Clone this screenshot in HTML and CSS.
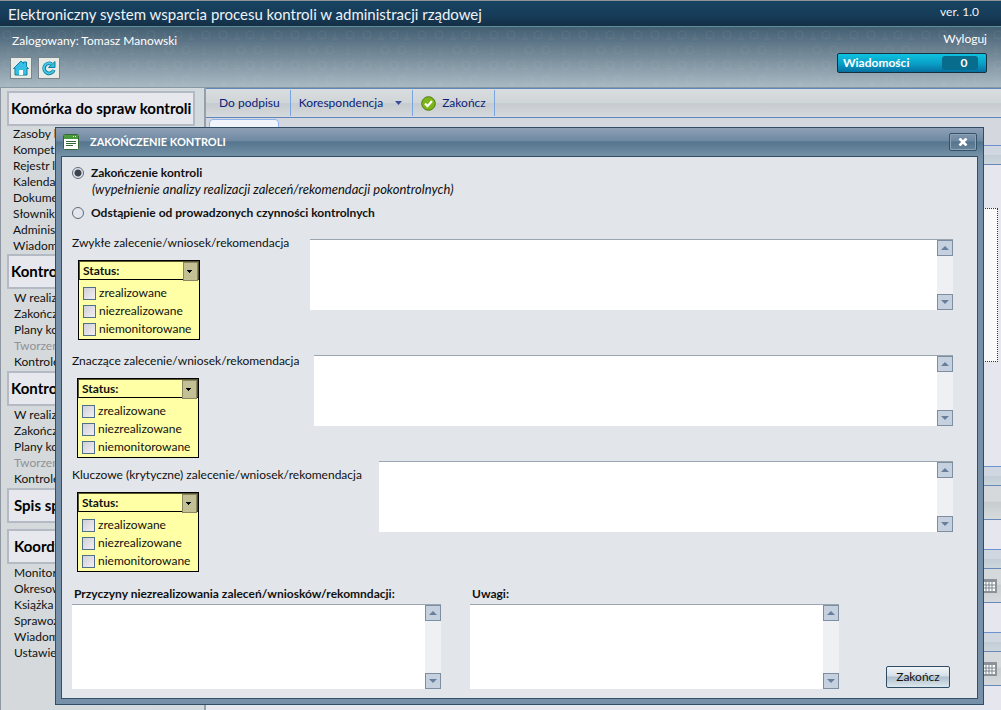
FILE: index.html
```html
<!DOCTYPE html>
<html lang="pl">
<head>
<meta charset="utf-8">
<title>Elektroniczny system wsparcia procesu kontroli</title>
<link rel="stylesheet" href="styles.css">
</head>
<body>
<header class="topbar">
  <h1>Elektroniczny system wsparcia procesu kontroli w administracji rządowej</h1>
  <span class="version">ver. 1.0</span>
</header>
<div class="banner">
  <svg class="pattern" width="100%" height="100%" aria-hidden="true">
    <defs>
      <pattern id="bits" width="72" height="30" patternUnits="userSpaceOnUse">
        <g fill="none" stroke="#fff">
          <ellipse cx="7" cy="8" rx="4" ry="4"/><path d="M21 4v8M18 12h6M47 4v8M44 12h6"/>
          <ellipse cx="34" cy="8" rx="4" ry="4"/><ellipse cx="62" cy="8" rx="4" ry="4"/>
          <path d="M8 19v8M5 27h6M60 19v8M57 27h6"/>
          <ellipse cx="25" cy="23" rx="4" ry="4"/><ellipse cx="42" cy="23" rx="4" ry="4"/>
        </g>
      </pattern>
    </defs>
    <rect width="100%" height="100%" fill="url(#bits)"/>
  </svg>
  <div class="user">
    <p>Zalogowany: Tomasz Manowski</p>
    <div class="tools">
      <button type="button" aria-label="Strona główna"><svg width="18" height="18" viewBox="0 0 18 18"><path d="M1.500 9.500 9 2l2.500 2.500V3h3v4.500l2 2H15V16H3V9.500z" fill="#35bfe6" stroke="#12809f"/><path d="M7 16v-5h4v5z" fill="#fff"/></svg></button>
      <button type="button" aria-label="Odśwież"><svg width="18" height="18" viewBox="0 0 18 18"><path d="M13.800 11A5 5 0 1 1 11.500 5" fill="none" stroke="#12809f" stroke-width="3.600"/><path d="M8.500 8.500h6.500V2.500z" fill="#35bfe6" stroke="#12809f"/><path d="M13.500 11.300A5 5 0 1 1 11.500 5" fill="none" stroke="#45c9ec" stroke-width="1.800"/></svg></button>
    </div>
  </div>
  <div class="session">
    <a href="#">Wyloguj</a>
    <button type="button" class="messages"><span>Wiadomości</span><span class="count">0</span></button>
  </div>
</div>
<div class="layout">
  <nav class="sidebar">
    <h2>Komórka do spraw kontroli</h2>
    <ul>
      <li>Zasoby l</li><li>Kompet</li><li>Rejestr l</li><li>Kalenda</li><li>Dokume</li><li>Słownik</li><li>Adminis</li><li>Wiadom</li>
    </ul>
    <h2>Kontro</h2>
    <ul class="inset">
      <li>W realiz</li><li>Zakończ</li><li>Plany ko</li><li class="off">Tworzen</li><li>Kontrole</li>
    </ul>
    <h2>Kontro</h2>
    <ul class="inset">
      <li>W realiz</li><li>Zakończ</li><li>Plany ko</li><li class="off">Tworzen</li><li>Kontrole</li>
    </ul>
    <h2 class="wide">Spis sp</h2>
    <h2 class="wide">Koordy</h2>
    <ul class="inset">
      <li>Monitor</li><li>Okresow</li><li>Książka</li><li>Sprawoz</li><li>Wiadom</li><li>Ustawie</li>
    </ul>
  </nav>
  <main class="content">
    <div class="toolbar">
      <button type="button">Do podpisu</button>
      <button type="button">Korespondencja <svg class="caret" width="7" height="4"><path d="M0 0h7L3.500 4z" fill="#3a4c9a"/></svg></button>
      <button type="button"><svg width="15" height="15" viewBox="0 0 15 15"><circle cx="7.500" cy="7.500" r="6.800" fill="#7cb518" stroke="#4f7d10"/><path d="M4 7.500l2.500 2.700L11 5" fill="none" stroke="#fff" stroke-width="2.200"/></svg> Zakończ</button>
    </div>
    <div class="tabs"><div class="tab"></div></div>
    <div class="bar"></div>
    <div class="notes"></div>
    <div class="bar"></div>
    <div class="strip"></div>
    <div class="bar spaced"></div>
    <div class="strip"><svg width="15" height="14" viewBox="0 0 15 14"><path d="M0 0h15v14H0z" fill="#8b9299"/><path d="M1 3h12v9H1z" fill="#fff"/><path d="M1 6h12M1 9h12M4 3v9M7 3v9M10 3v9" stroke="#7b848c"/></svg></div>
    <div class="bar spaced"></div>
    <div class="strip"><svg width="15" height="14" viewBox="0 0 15 14"><path d="M0 0h15v14H0z" fill="#8b9299"/><path d="M1 3h12v9H1z" fill="#fff"/><path d="M1 6h12M1 9h12M4 3v9M7 3v9M10 3v9" stroke="#7b848c"/></svg></div>
  </main>
</div>

<section class="dialog" role="dialog" aria-labelledby="dlg-title">
  <header class="dialog-head">
    <svg width="16" height="16" viewBox="0 0 16 16"><rect x=".5" y=".5" width="15" height="15" rx="1" fill="#fff" stroke="#37663a"/><path d="M1 1h14v4H1z" fill="#4a9a3c"/><path d="M10 2.500h1M12 2.500h1" stroke="#d9f5c8"/><path d="M3 7.500h10M3 9.500h10M3 11.500h7" stroke="#37663a"/></svg>
    <h2 id="dlg-title">ZAKOŃCZENIE KONTROLI</h2>
    <button type="button" class="close" aria-label="Zamknij"><svg width="10" height="8" viewBox="0 0 10 8"><path d="M1.500 0.500 8.500 7.500M8.500 0.500 1.500 7.500" stroke="#fff" stroke-width="2.600"/></svg></button>
  </header>
  <form class="dialog-body">
    <label class="choice"><input type="radio" name="mode" checked><b>Zakończenie kontroli</b></label>
    <p class="hint">(wypełnienie analizy realizacji zaleceń/rekomendacji pokontrolnych)</p>
    <label class="choice"><input type="radio" name="mode"><b>Odstąpienie od prowadzonych czynności kontrolnych</b></label>

    <div class="row first">
      <div class="side">
        <label for="t1">Zwykłe zalecenie/wniosek/rekomendacja</label>
        <div class="status">
          <div class="pick"><select aria-label="Status"><option>Status:</option></select></div>
          <label><input type="checkbox">zrealizowane</label>
          <label><input type="checkbox">niezrealizowane</label>
          <label><input type="checkbox">niemonitorowane</label>
        </div>
      </div>
      <div class="area"><textarea id="t1"></textarea><div class="scroll"><button type="button" aria-label="W górę"></button><button type="button" class="down" aria-label="W dół"></button></div></div>
    </div>
    <div class="row second">
      <div class="side">
        <label for="t2">Znaczące zalecenie/wniosek/rekomendacja</label>
        <div class="status">
          <div class="pick"><select aria-label="Status"><option>Status:</option></select></div>
          <label><input type="checkbox">zrealizowane</label>
          <label><input type="checkbox">niezrealizowane</label>
          <label><input type="checkbox">niemonitorowane</label>
        </div>
      </div>
      <div class="area"><textarea id="t2"></textarea><div class="scroll"><button type="button" aria-label="W górę"></button><button type="button" class="down" aria-label="W dół"></button></div></div>
    </div>
    <div class="row third">
      <div class="side">
        <label for="t3">Kluczowe (krytyczne) zalecenie/wniosek/rekomendacja</label>
        <div class="status">
          <div class="pick"><select aria-label="Status"><option>Status:</option></select></div>
          <label><input type="checkbox">zrealizowane</label>
          <label><input type="checkbox">niezrealizowane</label>
          <label><input type="checkbox">niemonitorowane</label>
        </div>
      </div>
      <div class="area"><textarea id="t3"></textarea><div class="scroll"><button type="button" aria-label="W górę"></button><button type="button" class="down" aria-label="W dół"></button></div></div>
    </div>
    <div class="footer">
      <div class="note">
        <label for="t4">Przyczyny niezrealizowania zaleceń/wniosków/rekomndacji:</label>
        <div class="area"><textarea id="t4"></textarea><div class="scroll"><button type="button" aria-label="W górę"></button><button type="button" class="down" aria-label="W dół"></button></div></div>
      </div>
      <div class="note">
        <label for="t5">Uwagi:</label>
        <div class="area"><textarea id="t5"></textarea><div class="scroll"><button type="button" aria-label="W górę"></button><button type="button" class="down" aria-label="W dół"></button></div></div>
      </div>
      <button type="button" class="finish">Zakończ</button>
    </div>
  </form>
</section>
</body>
</html>
```
FILE: styles.css
```css
* { box-sizing: border-box; }
html { height: 100%; }
body {
  margin: 0;
  min-height: 100%;
  display: flex;
  flex-direction: column;
  position: relative;
  font: 12px/16px Lato, "Noto Sans", sans-serif;
  color: #111;
  background: #e6e6ef;
}
h1, h2, p, ul { margin: 0; padding: 0; }
ul { list-style: none; }
button, select, textarea { font: inherit; color: inherit; }
button { padding: 0; border: 0; background: none; }
input { margin: 0; }

.topbar {
  display: flex;
  justify-content: space-between;
  align-items: center;
  height: 27px;
  padding: 0 22px 0 8px;
  color: #eef3f7;
  background: linear-gradient(#174463, #173c58 60%, #142e45);
  border-top: 1px solid #8e9496;
  border-bottom: 1px solid #5d8f94;
}
.topbar h1 { font-size: 15px; line-height: 20px; font-weight: 400; }
.version { padding-bottom: 4px; }

.banner {
  position: relative;
  display: flex;
  justify-content: space-between;
  height: 60px;
  padding: 6px 14px 0 10px;
  background: linear-gradient(#435f73, #728896 45%, #a9b9c3);
  color: #fff;
}
.pattern { position: absolute; left: 0; top: 0; opacity: .06; }
.user, .session { position: relative; display: flex; flex-direction: column; }
.user { gap: 8px; }
.user p { padding-left: 2px; }
.tools { display: flex; gap: 6px; }
.tools button {
  display: grid;
  place-items: center;
  width: 22px;
  height: 22px;
  background: #e9ebe6;
  border: 1px solid #7b868c;
}
.session { align-items: flex-end; gap: 6px; margin-top: -2px; }
.session a { color: #fff; text-decoration: none; }
.messages {
  display: flex;
  justify-content: space-between;
  align-items: center;
  width: 150px;
  height: 20px;
  padding: 0 8px 0 5px;
  font-weight: 700;
  border: 1px solid #16303f;
  border-radius: 2px;
  background: linear-gradient(#0cc4e0, #0a9dc6 55%, #0770a0);
  color: #fff;
}
.count { width: 36px; height: 14px; padding-left: 8px; line-height: 14px; border-radius: 3px; background: #086c8c; }

.layout { display: flex; flex: 1; border-top: 1px solid #8b98a3; }
.sidebar {
  width: 206px;
  padding: 3px 9px 0 6px;
  background: linear-gradient(90deg, #d5d9dc, #d3dadd);
  border-left: 1px solid #8f97a2;
  border-right: 2px solid #969fac;
}
.sidebar h2 {
  padding: 0 2px;
  font-size: 15px;
  line-height: 31px;
  border: 2px solid #b4bac4;
  background: #e6e8ee;
  color: #000;
  white-space: nowrap;
}
.sidebar h2.wide { padding: 0 5px; }
.sidebar h2.wide + h2 { margin-top: 6px; }
.sidebar ul { padding-left: 6px; }
.sidebar .inset { padding: 1px 0 1px 7px; }
.off { color: #8f9296; }

.content { flex: 1; }
.toolbar {
  display: flex;
  align-items: center;
  height: 30px;
  padding-left: 4px;
  background: linear-gradient(#d9dde0, #d0d5d8 50%, #c6cbcf 52%, #d6dadd);
  border: 1px solid #5f87bb;
  border-left: 0;
  border-right: 0;
}
.toolbar button {
  display: flex;
  align-items: center;
  gap: 6px;
  height: 26px;
  padding: 0 8px;
  color: #0b1e78;
  border-right: 1px solid #78a5e2;
}
.toolbar button:first-child { padding: 0 10px 0 9px; }
.caret { margin: 0 2px 0 6px; }
.tabs { height: 27px; padding: 1px 3px; background: #d4d8de; }
.tab { width: 70px; height: 24px; background: #f1f4fb; border: 1px solid #8db2ec; border-radius: 4px; }
.bar {
  height: 20px;
  background: linear-gradient(#d0d7e0 50%, #c2cdd6 50%, #cdd6dc);
  border-top: 1px solid #6c92cf;
  border-bottom: 1px solid #6788b8;
}
.notes { height: 154px; margin: 43px 3px 104px 0; border: 1px dotted #333; background: #fafafa; }
.strip {
  display: flex;
  align-items: center;
  justify-content: flex-end;
  height: 34px;
  padding-right: 4px;
  background: linear-gradient(#d5d9dc 45%, #c8cdd0 50%, #d6dadd);
  border-bottom: 1px solid #6788b8;
}
.spaced { margin-top: 29px; }

.dialog {
  position: absolute;
  left: 55px;
  right: 17px;
  top: 127px;
  padding: 0 5px 5px;
  border: 1px solid #2f4d66;
  background: #7590a8;
}
.dialog-head {
  display: flex;
  align-items: center;
  gap: 11px;
  height: 28px;
  margin: 0 -5px;
  padding: 0 6px 0 7px;
  color: #fff;
  background: linear-gradient(#8ea0b6, #6f89a2 45%, #55758e 50%, #7591a6);
}
.dialog-head h2 { flex: 1; font-size: 11px; line-height: 16px; }
.close {
  display: grid;
  place-items: center;
  width: 28px;
  height: 18px;
  border: 1px solid #33536b;
  border-radius: 2px;
  box-shadow: inset 0 0 0 1px #8ea4b5;
}
.dialog-body { padding: 8px 24px 9px 10px; border: 1px solid #33506a; background: #e2e6ea; }
.choice { display: flex; align-items: center; gap: 7px; }
.choice input {
  appearance: none;
  width: 12px;
  height: 12px;
  border: 1px solid #5f6a76;
  border-radius: 50%;
  background: #e4e6ee;
}
.choice input:checked { background: radial-gradient(#3b444c 0 3px, #e4e6ee 4px); }
.hint { padding: 0 0 8px 20px; font-size: 13px; font-style: italic; }

.row { display: flex; }
.first { margin: 14px 0 13px; }
.third { margin-top: 1px; }
.side { display: flex; flex-direction: column; align-items: flex-start; gap: 9px; flex: none; white-space: nowrap; }
.first .side { width: 238px; }
.second .side { width: 242px; }
.third .side { width: 307px; padding-top: 8px; }
.area { flex: 1; display: flex; height: 71px; background: #fff; border-top: 1px solid #9aa5b0; }
.first .area { margin-top: 4px; }
.second .area, .third .area { margin-top: 2px; }
.area textarea { flex: 1; min-width: 0; padding: 2px; border: 0; outline: 0; resize: none; overflow: hidden; background: #fff; }
.scroll { display: flex; flex-direction: column; justify-content: space-between; width: 16px; background: #eff0f4; }
.scroll button {
  display: grid;
  place-items: center;
  height: 16px;
  border: 1px solid #7d8ea0;
  background: #c6d1df;
}
.scroll button::before { content: ""; border: 4px solid transparent; border-top: 0; border-bottom-color: #667f9d; }
.scroll .down::before { border-top: 4px solid #667f9d; border-bottom: 0; }

.status { width: 122px; margin-left: 6px; border: 1px solid #000; background: #ffffa5; }
.second .status, .third .status { margin-left: 5px; }
.pick { position: relative; height: 19px; margin-bottom: 4px; border: 1px solid #555530; border-bottom-color: #000; }
.pick select { display: block; appearance: none; width: 100%; height: 17px; padding: 0 3px; border: 0; background: transparent; font-weight: 700; }
.pick::after {
  content: "";
  position: absolute;
  right: 0;
  top: 0;
  width: 13px;
  height: 17px;
  background: linear-gradient(#000, #000) 3px 7px / 5px 1px no-repeat, linear-gradient(#000, #000) 4px 8px / 3px 1px no-repeat, linear-gradient(#000, #000) 5px 9px / 1px 1px no-repeat, #c4c096;
  border: 1px solid #8a8760;
  pointer-events: none;
}
.status label { display: flex; align-items: center; gap: 3px; height: 18px; padding-left: 4px; }
.status label:last-child { margin-bottom: 1px; }
.status input {
  appearance: none;
  width: 13px;
  height: 13px;
  border: 1px solid #4f6f8a;
  background: linear-gradient(135deg, #d0d0d8, #f2eef2);
}

.footer { display: flex; align-items: flex-end; gap: 29px; margin-top: 14px; }
.note { flex: 0 1 369px; font-weight: 700; }
.note label { padding-left: 2px; }
.note .area { margin-top: 2px; height: 85px; }
.finish {
  width: 64px;
  height: 22px;
  margin: 0 3px 1px auto;
  border: 1px solid #2f4d66;
  border-radius: 2px;
  background: linear-gradient(#f0f4f7, #d5dfe7 45%, #aebfcc 50%, #dde8ee);
}
```
